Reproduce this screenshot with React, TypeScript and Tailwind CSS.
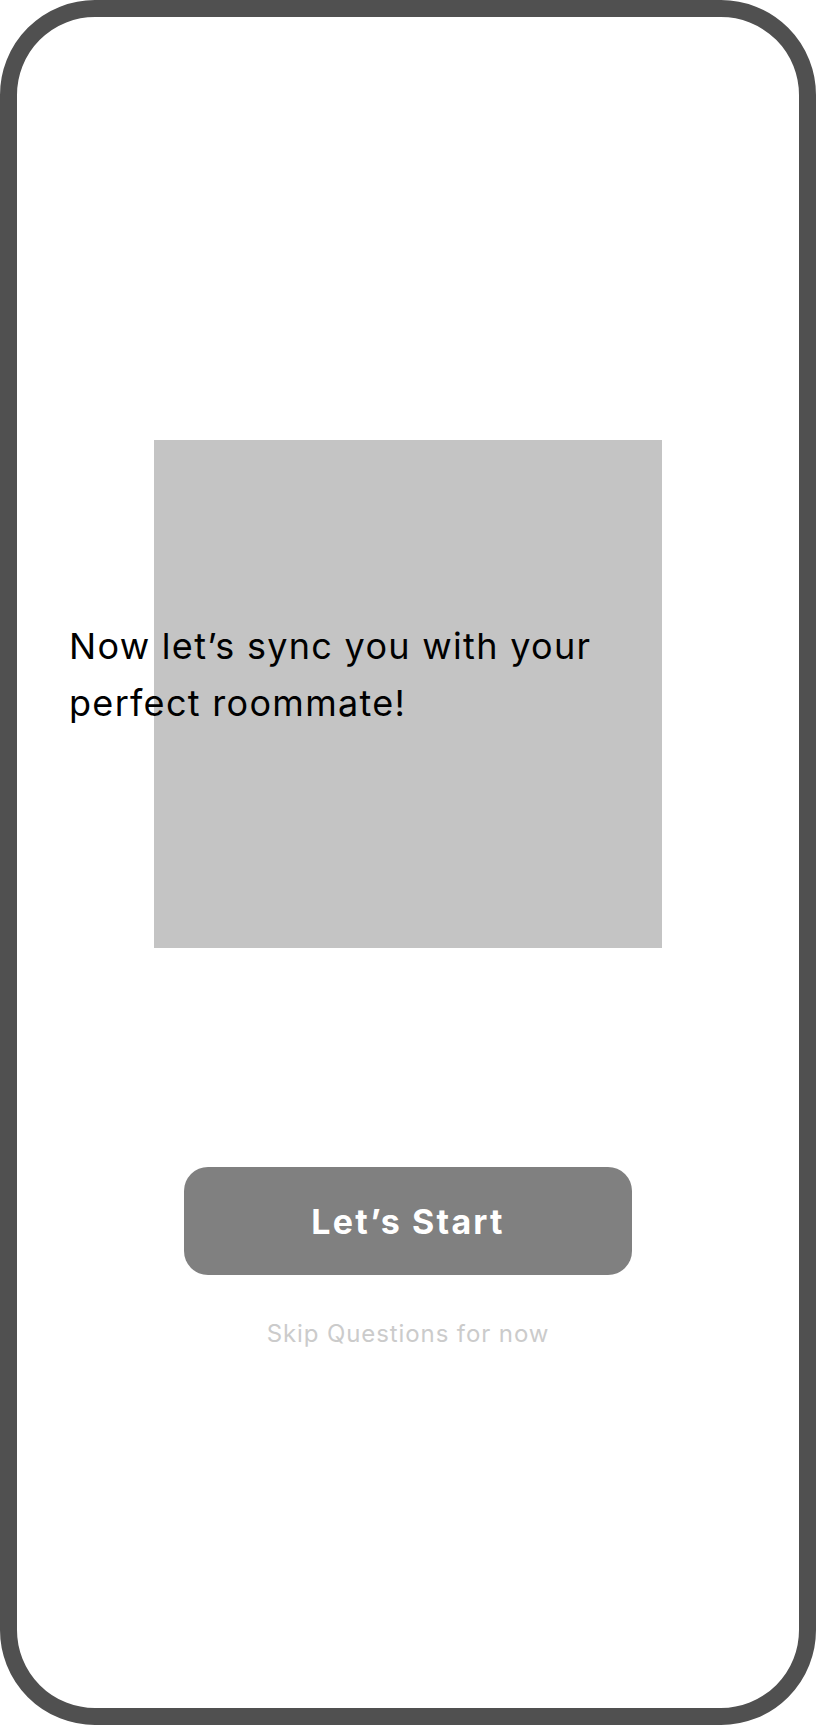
export default function App() {
  return (
    <div className="w-[816px] h-[1725px] bg-white" style={{ fontFamily: "Inter, 'Noto Sans', sans-serif" }}>
      <div className="w-[816px] h-[1725px] border-[17px] border-[#505050] rounded-[95px] bg-white flex flex-col items-center">
        <div className="grid mt-[423px] w-full">
          <div className="col-start-1 row-start-1 mx-auto w-[508px] h-[508px] bg-[#c4c4c4]" />
          <h1 className="col-start-1 row-start-1 self-start mt-[178px] ml-[52px] text-[36px] leading-[57px] tracking-[1.3px] font-normal text-black">
            Now let’s sync you with your
            <br />
            perfect roommate!
          </h1>
        </div>
        <button className="mt-[219px] w-[448px] h-[108px] rounded-[24px] bg-[#808080] text-white text-[34px] tracking-[2.2px] font-bold flex items-center justify-center">
          Let’s Start
        </button>
        <p className="mt-[41px] text-[24px] tracking-[0.9px] text-[#cbcbcb]">Skip Questions for now</p>
      </div>
    </div>
  );
}
